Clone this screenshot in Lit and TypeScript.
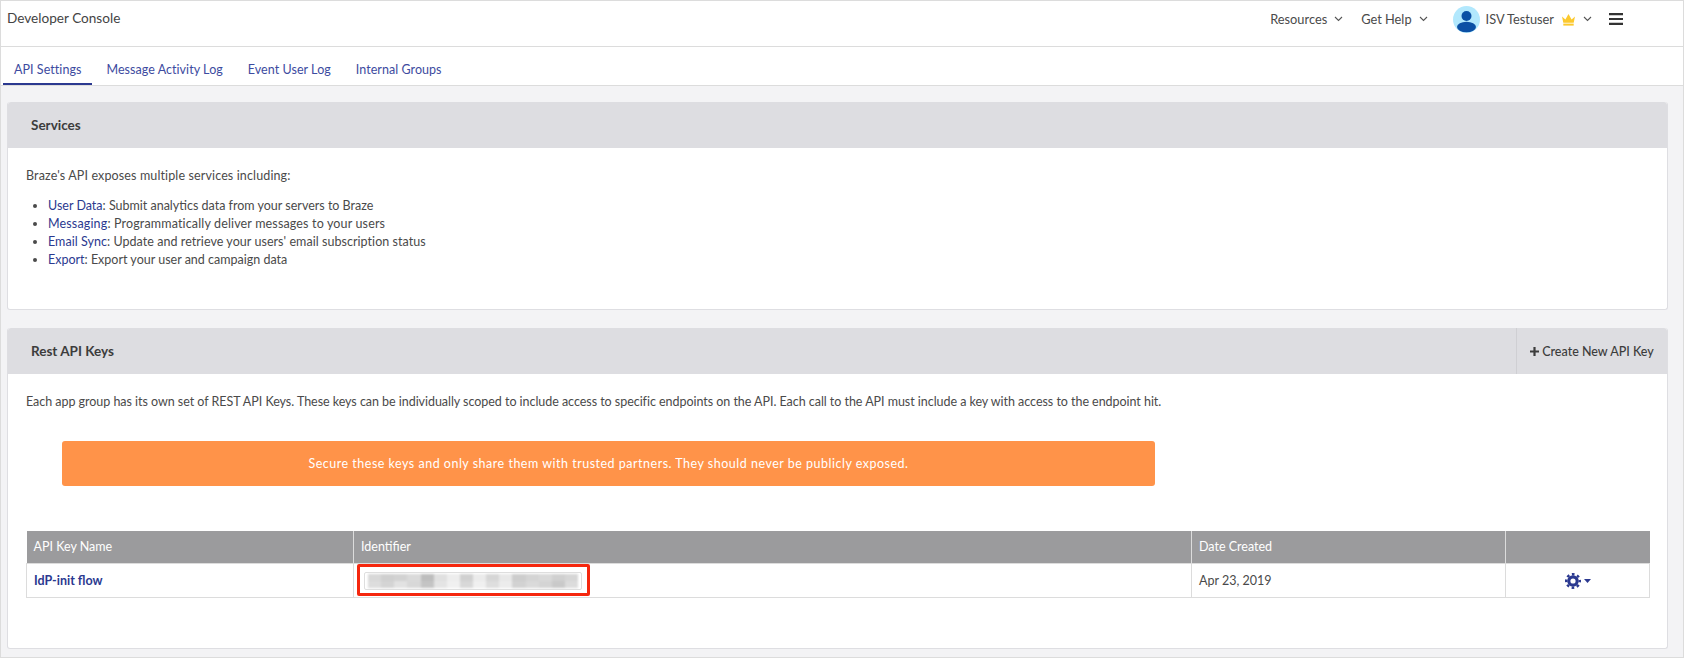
import { LitElement, html, css, svg } from 'lit'
import { customElement } from 'lit/decorators.js'

const BLUR = [
  ['#d8d8d8', '#cfcfcf', '#d2d2d2', '#dadada', '#bdbdbd', '#e0e0e0', '#ededed', '#d0d0d0', '#ebebeb', '#d6d6d6', '#e8e8e8', '#cdcdcd', '#d4d4d4', '#d9d9d9', '#d0d0d0', '#d6d6d6'],
  ['#dddddd', '#d4d4d4', '#e2e2e2', '#d8d8d8', '#c4c4c4', '#e4e4e4', '#f0f0f0', '#d8d8d8', '#f0f0f0', '#dedede', '#ececec', '#d2d2d2', '#dadada', '#d4d4d4', '#c9c9c9', '#dcdcdc'],
]

const chevron = svg`<path d="M1 1l3.5 3.5L8 1" fill="none" stroke="#555" stroke-width="1.1"/>`

@customElement('app-root')
export class AppRoot extends LitElement {
  static styles = css`
    :host {
      display: block;
      font-family: 'Lato', 'Liberation Sans', sans-serif;
      font-size: 12.5px;
      color: #4a4a4a;
    }
    a { color: #2b3990; text-decoration: none; }
    .page {
      height: 658px;
      box-sizing: border-box;
      border: 1px solid #dcdcdc;
      background: #f3f3f5;
      display: flex;
      flex-direction: column;
    }
    .topbar {
      height: 45px;
      flex: none;
      background: #fff;
      border-bottom: 1px solid #dcdcdc;
      display: flex;
      align-items: flex-start;
      justify-content: space-between;
    }
    .brand { margin: 8px 0 0 6px; font-size: 13.6px; line-height: 18px; color: #444; }
    .nav { display: flex; align-items: center; height: 36px; padding-right: 60px; font-size: 12.8px; }
    .nav-item { display: flex; align-items: center; gap: 7px; margin-right: 18px; }
    .nav-item.last { margin-right: 25px; }
    .nav-item svg { width: 9px; height: 6px; }
    .avatar { width: 27px; height: 27px; margin-right: 6px; }
    .user { display: flex; align-items: center; margin-right: 17px; }
    .crown { width: 15px; height: 13px; margin: 0 7px; }
    .user svg.chev { width: 9px; height: 6px; }
    .burger { width: 14px; height: 12px; }
    .tabs {
      height: 38px;
      flex: none;
      background: #fff;
      border-bottom: 1px solid #dcdcdc;
      display: flex;
      gap: 3px;
      padding-left: 2px;
    }
    .tab {
      padding: 7px 11px 0;
      line-height: 31px;
      font-size: 12.5px;
      letter-spacing: 0.05px;
      color: #3d4ba0;
    }
    .tab.active { height: 38px; box-sizing: border-box; border-bottom: 2px solid #2b3990; }
    .content {
      padding: 16px 15px 0 6px;
      display: flex;
      flex-direction: column;
      gap: 18px;
    }
    .card {
      background: #fff;
      border: 1px solid #dedee2;
      border-top: 0;
      border-radius: 3px;
      box-sizing: border-box;
    }
    .card.services { height: 208px; }
    .card.keys { height: 321px; }
    .card-head {
      height: 46px;
      background: #dddde1;
      border-radius: 3px 3px 0 0;
      display: flex;
      align-items: center;
      justify-content: space-between;
      padding-left: 23px;
      font-size: 13.5px;
      font-weight: 700;
      color: #3c3c3c;
    }
    .create {
      height: 46px;
      width: 151px;
      box-sizing: border-box;
      border-left: 1px solid #cfcfd3;
      display: flex;
      align-items: center;
      justify-content: center;
      gap: 3px;
      font-size: 12.5px;
      font-weight: 500;
    }
    .create svg { width: 9px; height: 9px; }
    .card-body { padding: 19px 18px 0 18px; line-height: 18px; }
    .card-body p { margin: 0; }
    .intro { letter-spacing: 0.13px; }
    .lead { letter-spacing: -0.04px; }
    ul { margin: 12px 0 0 0; padding: 0 0 0 22px; }
    li.wide { letter-spacing: 0.15px; }
    li.mid { letter-spacing: 0.05px; }
    .banner {
      margin: 30px 0 0 36px;
      width: 1093px;
      height: 45px;
      background: #ff9349;
      border-radius: 3px;
      color: #fff;
      letter-spacing: 0.5px;
      display: flex;
      align-items: center;
      justify-content: center;
    }
    table {
      margin: 45px 0 0 0;
      width: 1623px;
      table-layout: fixed;
      border-collapse: collapse;
    }
    th {
      height: 32px;
      padding: 0 0 0 7px;
      background: #9b9b9d;
      color: #fff;
      font-weight: 400;
      text-align: left;
      border-left: 1px solid #dcdcdc;
    }
    th:first-child { border-left: 0; }
    td {
      height: 33px;
      padding: 0 0 0 7px;
      border: 1px solid #dcdcdc;
    }
    td.name { font-weight: 700; }
    td.id { padding: 0; position: relative; }
    .mark {
      position: absolute;
      left: 3px;
      top: 0;
      width: 233px;
      height: 32px;
      box-sizing: border-box;
      border: 3px solid #f5270e;
      border-radius: 2px;
      padding: 5px 5px 0 4px;
    }
    .field {
      height: 18px;
      box-sizing: border-box;
      border: 1px solid #dedede;
      border-radius: 2px;
      overflow: hidden;
      padding: 1px 3px;
    }
    .blur { filter: blur(0.8px); }
    .blur-row { display: flex; height: 7px; }
    .blur-row i { flex: 1; }
    td.actions { padding: 0; text-align: center; }
    .gear { display: inline-flex; align-items: center; gap: 3px; vertical-align: middle; }
    .gear svg.cog { width: 16px; height: 16px; }
    .gear svg.caret { width: 7px; height: 4px; }
  `

  render() {
    return html`
      <div class="page">
        <header class="topbar">
          <div class="brand">Developer Console</div>
          <nav class="nav">
            <div class="nav-item">Resources <svg viewBox="0 0 9 6">${chevron}</svg></div>
            <div class="nav-item last">Get Help <svg viewBox="0 0 9 6">${chevron}</svg></div>
            <div class="user">
              <svg class="avatar" viewBox="0 0 27 27">
                <circle cx="13.5" cy="13.5" r="13.5" fill="#b2e8fd" />
                <circle cx="13.5" cy="10" r="5" fill="#0b50a5" />
                <ellipse cx="13.5" cy="21" rx="9.5" ry="5.2" fill="#0b50a5" />
              </svg>
              ISV Testuser
              <svg class="crown" viewBox="0 0 15 13">
                <path d="M1 3.5l3.4 3L7.5 1l3.1 5.5 3.4-3-1.3 6.2H2.3z" fill="#fcc92e" />
                <rect x="2.3" y="10.6" width="10.4" height="2" fill="#fcc92e" />
              </svg>
              <svg class="chev" viewBox="0 0 9 6">${chevron}</svg>
            </div>
            <svg class="burger" viewBox="0 0 14 12">
              <path d="M0 0h14v2.2H0zM0 4.9h14v2.2H0zM0 9.8h14V12H0z" fill="#333" />
            </svg>
          </nav>
        </header>
        <div class="tabs">
          <a class="tab active">API Settings</a>
          <a class="tab">Message Activity Log</a>
          <a class="tab">Event User Log</a>
          <a class="tab">Internal Groups</a>
        </div>
        <main class="content">
          <section class="card services">
            <div class="card-head">Services</div>
            <div class="card-body">
              <p class="intro">Braze's API exposes multiple services including:</p>
              <ul>
                <li><a>User Data</a>: Submit analytics data from your servers to Braze</li>
                <li class="wide"><a>Messaging</a>: Programmatically deliver messages to your users</li>
                <li class="mid"><a>Email Sync</a>: Update and retrieve your users' email subscription status</li>
                <li><a>Export</a>: Export your user and campaign data</li>
              </ul>
            </div>
          </section>
          <section class="card keys">
            <div class="card-head">
              Rest API Keys
              <div class="create">
                <svg viewBox="0 0 9 9"><path d="M3.4 0h2.2v3.4H9v2.2H5.6V9H3.4V5.6H0V3.4h3.4z" fill="#3c3c3c" /></svg>
                Create New API Key
              </div>
            </div>
            <div class="card-body">
              <p class="lead">Each app group has its own set of REST API Keys. These keys can be individually scoped to include access to specific endpoints on the API. Each call to the API must include a key with access to the endpoint hit.</p>
              <div class="banner">Secure these keys and only share them with trusted partners. They should never be publicly exposed.</div>
              <table>
                <colgroup>
                  <col style="width:327px" /><col style="width:838px" /><col style="width:314px" /><col style="width:144px" />
                </colgroup>
                <thead>
                  <tr><th>API Key Name</th><th>Identifier</th><th>Date Created</th><th></th></tr>
                </thead>
                <tbody>
                  <tr>
                    <td class="name"><a>IdP-init flow</a></td>
                    <td class="id">
                      <div class="mark">
                        <div class="field">
                          <div class="blur">
                            ${BLUR.map(
                              (row) => html`<div class="blur-row">${row.map((c) => html`<i style="background:${c}"></i>`)}</div>`,
                            )}
                          </div>
                        </div>
                      </div>
                    </td>
                    <td>Apr 23, 2019</td>
                    <td class="actions">
                      <span class="gear">
                        <svg class="cog" viewBox="0 0 16 16">
                          <circle cx="8" cy="8" r="4.2" fill="none" stroke="#2b3990" stroke-width="3.2" />
                          <circle cx="8" cy="8" r="6.8" fill="none" stroke="#2b3990" stroke-width="2.4" stroke-dasharray="2.67 2.67" stroke-dashoffset="1.33" />
                        </svg>
                        <svg class="caret" viewBox="0 0 7 4"><path d="M0 0h7L3.5 4z" fill="#2b3990" /></svg>
                      </span>
                    </td>
                  </tr>
                </tbody>
              </table>
            </div>
          </section>
        </main>
      </div>
    `
  }
}
